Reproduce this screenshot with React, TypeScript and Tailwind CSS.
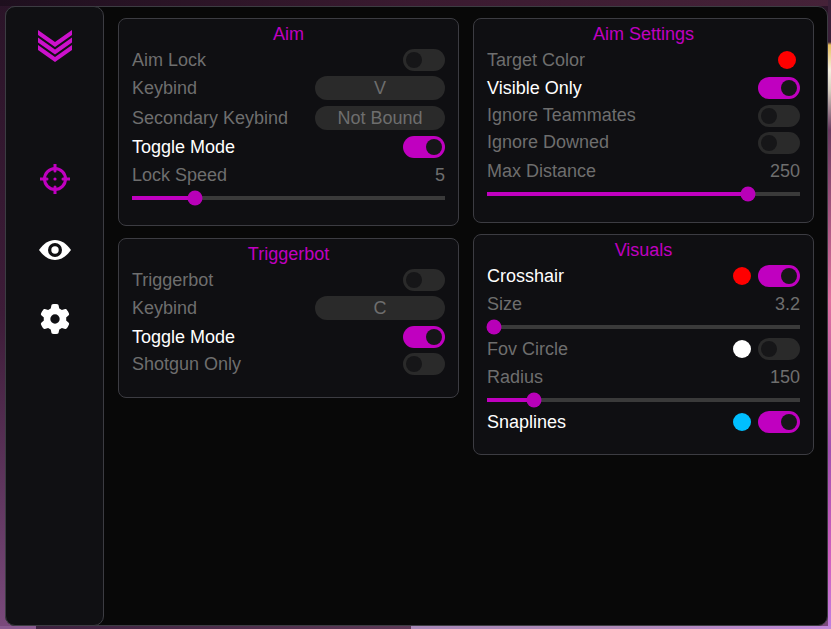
import { FaGear } from "react-icons/fa6";

const Toggle = ({ on }: { on?: boolean }) => (
  <div
    className={`flex h-[22px] w-[42px] shrink-0 items-center rounded-full px-[3px] ${on ? "justify-end bg-[#c000c0]" : "justify-start bg-[#2a2a2a]"}`}
  >
    <div className="h-4 w-4 rounded-full bg-[#161618]" />
  </div>
);

const Swatch = ({ color }: { color: string }) => (
  <div className={`h-[18px] w-[18px] shrink-0 rounded-full ${color}`} />
);

const Row = ({
  label,
  active,
  className = "h-7",
  children,
}: {
  label: string;
  active?: boolean;
  className?: string;
  children?: React.ReactNode;
}) => (
  <div className={`flex items-center justify-between ${className}`}>
    <span className={active ? "text-white" : "text-[#6e6e6e]"}>{label}</span>
    {children}
  </div>
);

const Keybind = ({ value }: { value: string }) => (
  <div className="flex h-6 w-[130px] items-center justify-center rounded-xl bg-[#2a2a2a] text-[#6e6e6e]">
    {value}
  </div>
);

const Slider = ({ value }: { value: number }) => (
  <div className="relative h-1 w-full bg-[#3a3a3a]">
    <div className="absolute left-0 top-0 h-1 bg-[#c000c0]" style={{ width: value }} />
    <div
      className="absolute top-1/2 h-[15px] w-[15px] -translate-x-1/2 -translate-y-1/2 rounded-full bg-[#b800b8]"
      style={{ left: value }}
    />
  </div>
);

const Card = ({
  title,
  className,
  children,
}: {
  title: string;
  className: string;
  children: React.ReactNode;
}) => (
  <section
    className={`rounded-lg border border-[#3c3c42] bg-[#0f0f12] px-[13px] pt-[5px] ${className}`}
  >
    <h2 className="h-[22px] text-center text-[18px] leading-[21px] font-normal text-[#c000c0]">
      {title}
    </h2>
    {children}
  </section>
);

const Logo = () => (
  <svg width="34" height="32" viewBox="0 0 34 32" fill="#cc10cc" className="shrink-0">
    <polygon points="0,0 17,12 34,0 34,5 17,17 0,5" />
    <polygon points="0,7.5 17,19.5 34,7.5 34,12.5 17,24.5 0,12.5" />
    <polygon points="0,15 17,27 34,15 34,20 17,32 0,20" />
  </svg>
);

const Crosshair = () => (
  <svg width="30" height="30" viewBox="0 0 30 30" fill="none" stroke="#c000c0" strokeWidth="3" className="shrink-0">
    <circle cx="15" cy="15" r="10.5" />
    <path d="M15 0v7M15 23v7M0 15h7M23 15h7" strokeLinecap="round" />
    <circle cx="15" cy="15" r="1.6" fill="#c000c0" stroke="none" />
  </svg>
);

const Eye = () => (
  <svg width="32" height="20" viewBox="0 0 32 20" className="shrink-0">
    <path d="M0 10C4.5 3.5 10 0 16 0s11.5 3.5 16 10c-4.5 6.500-10 10-16 10S4.500 16.500 0 10z" fill="#ffffff" />
    <circle cx="16" cy="10" r="7" fill="#101013" />
    <circle cx="16" cy="10" r="3.700" fill="#ffffff" />
  </svg>
);

export default function App() {
  return (
    <div className="relative h-[629px] w-[831px] overflow-hidden bg-[linear-gradient(180deg,#2a1428_0%,#3d1c38_50%,#7a4a7c_100%)] pb-[3px] pl-[5px] pr-[3px] pt-[6px] font-['Liberation_Sans',sans-serif] text-[18px]">
      {/* wallpaper showing around the window */}
      <div className="absolute inset-x-0 top-0 h-[6px] bg-[linear-gradient(90deg,#1e0f1e_0%,#3a1a30_50%,#452238_100%)]" />
      <div className="absolute bottom-0 right-0 top-0 w-[3px] bg-[linear-gradient(180deg,#3a2038_0px,#3a2038_42px,#e8c060_45px,#f5f0e0_70px,#d8d0c0_90px,#6a3a60_130px,#e070a0_300px,#a050b0_450px,#d060c0_560px,#c080e0_629px)]" />
      <div className="absolute inset-x-0 bottom-0 flex h-[3px]">
        <div className="w-[36px] bg-[#8a5a90]" />
        <div className="w-[375px] bg-[linear-gradient(90deg,#3e2240,#5e3a58)]" />
        <div className="flex-1 bg-[linear-gradient(90deg,#a888b8,#b08ab8,#c088d8)]" />
      </div>

      <div className="relative flex h-full rounded-[10px] border border-[#3c3c42] bg-[#080808]">
        <aside className="-my-px -ml-px flex w-[99px] shrink-0 flex-col items-center rounded-[10px] border border-[#3c3c42] bg-[#101013] pt-[23px]">
          <Logo />
          <div className="mt-[102px]">
            <Crosshair />
          </div>
          <div className="mt-[46px]">
            <Eye />
          </div>
          <div className="mt-[44px] text-white">
            <FaGear size={30} />
          </div>
        </aside>

        <main className="flex flex-1 gap-[14px] pl-[14px] pt-[11px]">
          <div className="flex w-[341px] flex-col gap-[12px]">
            <Card title="Aim" className="h-[208px]">
              <Row label="Aim Lock">
                <Toggle />
              </Row>
              <Row label="Keybind">
                <Keybind value="V" />
              </Row>
              <Row label="Secondary Keybind" className="mt-0.5 h-7">
                <Keybind value="Not Bound" />
              </Row>
              <Row label="Toggle Mode" active className="mt-px h-7">
                <Toggle on />
              </Row>
              <Row label="Lock Speed">
                <span className="text-[#6e6e6e]">5</span>
              </Row>
              <div className="pt-[7px]">
                <Slider value={63} />
              </div>
            </Card>
            <Card title="Triggerbot" className="h-[160px]">
              <Row label="Triggerbot">
                <Toggle />
              </Row>
              <Row label="Keybind">
                <Keybind value="C" />
              </Row>
              <Row label="Toggle Mode" active className="mt-px h-7">
                <Toggle on />
              </Row>
              <Row label="Shotgun Only" className="h-[26px]">
                <Toggle />
              </Row>
            </Card>
          </div>

          <div className="flex w-[341px] flex-col gap-[11px]">
            <Card title="Aim Settings" className="h-[205px]">
              <Row label="Target Color">
                <div className="mr-1">
                  <Swatch color="bg-[#ff0000]" />
                </div>
              </Row>
              <Row label="Visible Only" active>
                <Toggle on />
              </Row>
              <Row label="Ignore Teammates" className="h-[27px]">
                <Toggle />
              </Row>
              <Row label="Ignore Downed" className="h-[27px]">
                <Toggle />
              </Row>
              <Row label="Max Distance" className="mt-px h-7">
                <span className="text-[#6e6e6e]">250</span>
              </Row>
              <div className="pt-[7px]">
                <Slider value={261} />
              </div>
            </Card>
            <Card title="Visuals" className="h-[221px]">
              <Row label="Crosshair" active>
                <div className="flex items-center gap-[7px]">
                  <Swatch color="bg-[#ff0000]" />
                  <Toggle on />
                </div>
              </Row>
              <Row label="Size">
                <span className="text-[#6e6e6e]">3.2</span>
              </Row>
              <div className="flex h-[17px] items-center">
                <Slider value={7} />
              </div>
              <Row label="Fov Circle">
                <div className="flex items-center gap-[7px]">
                  <Swatch color="bg-white" />
                  <Toggle />
                </div>
              </Row>
              <Row label="Radius">
                <span className="text-[#6e6e6e]">150</span>
              </Row>
              <div className="flex h-[17px] items-center">
                <Slider value={47} />
              </div>
              <Row label="Snaplines" active>
                <div className="flex items-center gap-[7px]">
                  <Swatch color="bg-[#00bfff]" />
                  <Toggle on />
                </div>
              </Row>
            </Card>
          </div>
        </main>
      </div>
    </div>
  );
}
